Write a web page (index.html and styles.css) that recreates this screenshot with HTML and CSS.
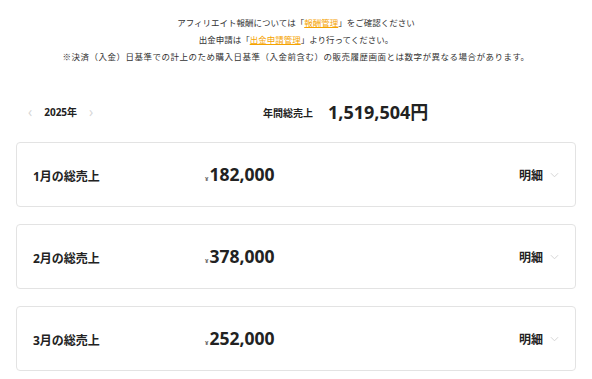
FILE: index.html
```html
<!DOCTYPE html>
<html lang="ja">
<head>
    <meta charset="UTF-8">
    <meta name="viewport" content="width=device-width, initial-scale=1.0">
    <title>売上管理</title>
    <link rel="stylesheet" href="styles.css">
</head>
<body>

    <!-- Notice -->
    <div class="notice">
        <p>アフィリエイト報酬については「<a href="#">報酬管理</a>」をご確認ください</p>
        <p>出金申請は「<a href="#">出金申請管理</a>」より行ってください。</p>
        <p class="note">※決済（入金）日基準での計上のため購入日基準（入金前含む）の販売履歴画面とは数字が異なる場合があります。</p>
    </div>

    <!-- Year summary -->
    <div class="summary">
        <div class="year-nav">
            <span class="arrow">&lsaquo;</span>
            <span class="year">2025年</span>
            <span class="arrow">&rsaquo;</span>
        </div>
        <div class="total">
            <span class="total-label">年間総売上</span>
            <span class="total-amount">1,519,504円</span>
        </div>
    </div>

    <!-- Monthly cards -->
    <div class="months">
        <div class="card">
            <div class="card-label">1月の総売上</div>
            <div class="card-amount"><span class="yen">¥</span>182,000</div>
            <div class="card-detail">明細 <svg class="chevron" viewBox="0 0 10 6"><path d="M1 1l4 4 4-4"/></svg></div>
        </div>
        <div class="card">
            <div class="card-label">2月の総売上</div>
            <div class="card-amount"><span class="yen">¥</span>378,000</div>
            <div class="card-detail">明細 <svg class="chevron" viewBox="0 0 10 6"><path d="M1 1l4 4 4-4"/></svg></div>
        </div>
        <div class="card">
            <div class="card-label">3月の総売上</div>
            <div class="card-amount"><span class="yen">¥</span>252,000</div>
            <div class="card-detail">明細 <svg class="chevron" viewBox="0 0 10 6"><path d="M1 1l4 4 4-4"/></svg></div>
        </div>
    </div>

</body>
</html>
```

FILE: styles.css
```css
body {
    margin: 0;
    background-color: #fff;
    color: #222;
    font-family: "Open Sans", "Noto Sans CJK JP", sans-serif;
}
.notice {
    padding-top: 14px;
    text-align: center;
    font-size: 8.5px;
    line-height: 17px;
    color: #333;
}
.notice p {
    margin: 0;
}
.notice .note {
    letter-spacing: 0.5px;
}
.notice a {
    color: #f5a300;
    text-decoration: underline;
}
.summary {
    display: flex;
    align-items: center;
    height: 24px;
    margin-top: 34px;
    padding: 0 28px;
}
.year-nav {
    display: flex;
    align-items: center;
    width: 235px;
    font-size: 10px;
    font-weight: bold;
}
.arrow {
    color: #d6d6d6;
    font-size: 14px;
    font-weight: normal;
}
.year {
    margin: 0 12px 0 12px;
}
.total {
    display: flex;
    align-items: center;
    gap: 15px;
}
.total-label {
    font-size: 10px;
    font-weight: bold;
    padding-top: 3px;
}
.total-amount {
    font-size: 18px;
    font-weight: bold;
}
.months {
    display: flex;
    flex-direction: column;
    gap: 17px;
    margin: 19px 16px 0;
}
.card {
    display: flex;
    align-items: center;
    height: 63px;
    padding: 0 16px;
    border: 1px solid #e3e3e3;
    border-radius: 4px;
}
.card-label {
    width: 172px;
    font-size: 12px;
    font-weight: bold;
    padding-top: 2px;
}
.card-amount {
    flex: 1;
    font-size: 17.5px;
    font-weight: bold;
    padding-bottom: 1px;
}
.yen {
    font-size: 6px;
    color: #666;
    margin-right: 1px;
}
.card-detail {
    display: flex;
    align-items: center;
    gap: 7px;
    font-size: 12px;
    font-weight: bold;
}
.chevron {
    width: 9px;
    height: 6px;
    fill: none;
    stroke: #d0d0d0;
    stroke-width: 1;
}
```
